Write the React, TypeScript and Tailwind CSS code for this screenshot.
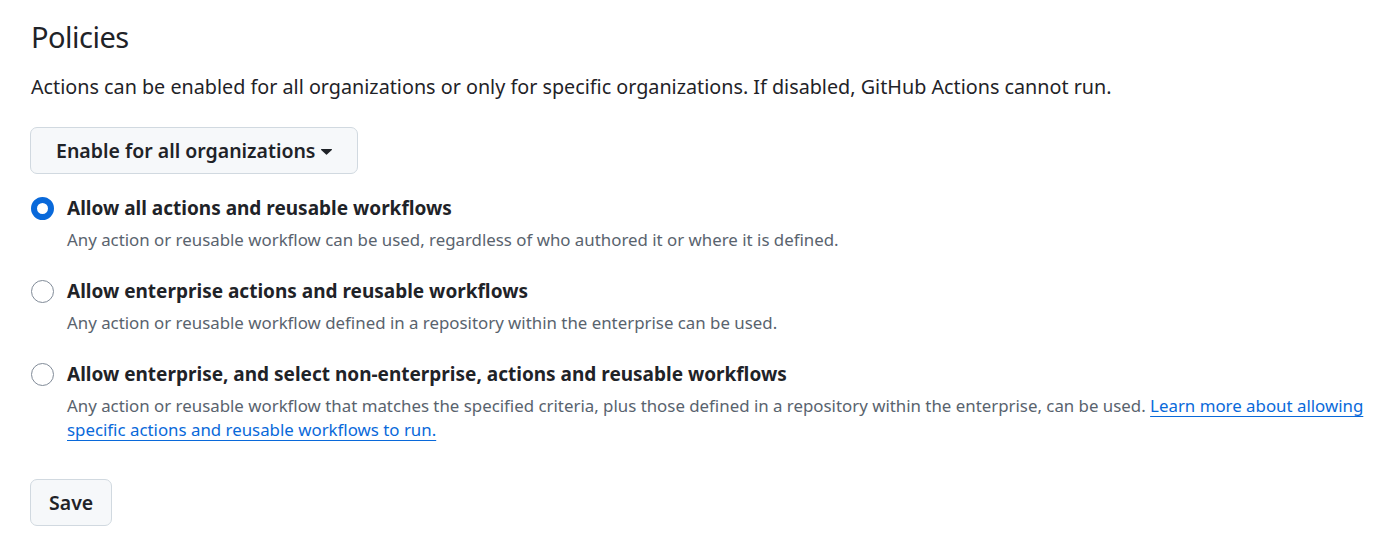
import React from "react";

const font = { fontFamily: '"Noto Sans", "Liberation Sans", sans-serif' };

function Radio({ checked }: { checked?: boolean }) {
  return checked ? (
    <span className="mt-[1px] box-border block h-[23px] w-[23px] shrink-0 rounded-full border-[6.5px] border-[#0969da] bg-white" />
  ) : (
    <span className="mt-[1px] box-border block h-[23px] w-[23px] shrink-0 rounded-full border border-[#818b98] bg-white" />
  );
}

function Option({
  checked,
  label,
  children,
}: {
  checked?: boolean;
  label: string;
  children: React.ReactNode;
}) {
  return (
    <div className="flex gap-[13px]">
      <Radio checked={checked} />
      <div className="flex flex-col">
        <div className="text-[19px] font-bold leading-[25px] text-[#1f2328]">{label}</div>
        <div className="mt-[7px] text-[16.85px] leading-[24px] text-[#59636e]">{children}</div>
      </div>
    </div>
  );
}

export default function App() {
  return (
    <div className="min-h-[537px] bg-white pl-[31px] pr-[12px] pt-[18px]" style={font}>
      <h2 className="text-[29px] font-normal leading-[38px] tracking-[-0.5px] text-[#1f2328]">Policies</h2>
      <p className="mt-[16px] text-[19.75px] leading-[30px] text-[#1f2328]">
        Actions can be enabled for all organizations or only for specific organizations. If disabled, GitHub Actions cannot run.
      </p>
      <button className="mt-[25px] -ml-[1px] flex h-[47px] items-center gap-[5px] rounded-[7px] border border-[#d1d9e0] bg-[#f6f8fa] px-[25px] text-[19.5px] font-semibold text-[#1f2328]">
        Enable for all organizations
        <svg width="11" height="6" viewBox="0 0 11 6" fill="currentColor" className="mt-[2px]">
          <path d="M0.6 0h9.8a.6.6 0 0 1 .42 1.02L5.92 5.58a.6.6 0 0 1-.84 0L.18 1.02A.6.6 0 0 1 .6 0Z" />
        </svg>
      </button>
      <div className="mt-[22px] flex flex-col gap-[27px]">
        <Option checked label="Allow all actions and reusable workflows">
          Any action or reusable workflow can be used, regardless of who authored it or where it is defined.
        </Option>
        <Option label="Allow enterprise actions and reusable workflows">
          Any action or reusable workflow defined in a repository within the enterprise can be used.
        </Option>
        <Option label="Allow enterprise, and select non-enterprise, actions and reusable workflows">
          Any action or reusable workflow that matches the specified criteria, plus those defined in a repository within the enterprise, can be used.{" "}
          <a href="#" className="text-[#0969da] underline decoration-1 underline-offset-[4px]">
            Learn more about allowing specific actions and reusable workflows to run.
          </a>
        </Option>
      </div>
      <button className="mt-[37px] -ml-[1px] flex h-[47px] items-center rounded-[7px] border border-[#d1d9e0] bg-[#f6f8fa] px-[18px] text-[19.5px] font-semibold text-[#1f2328]">
        Save
      </button>
    </div>
  );
}
